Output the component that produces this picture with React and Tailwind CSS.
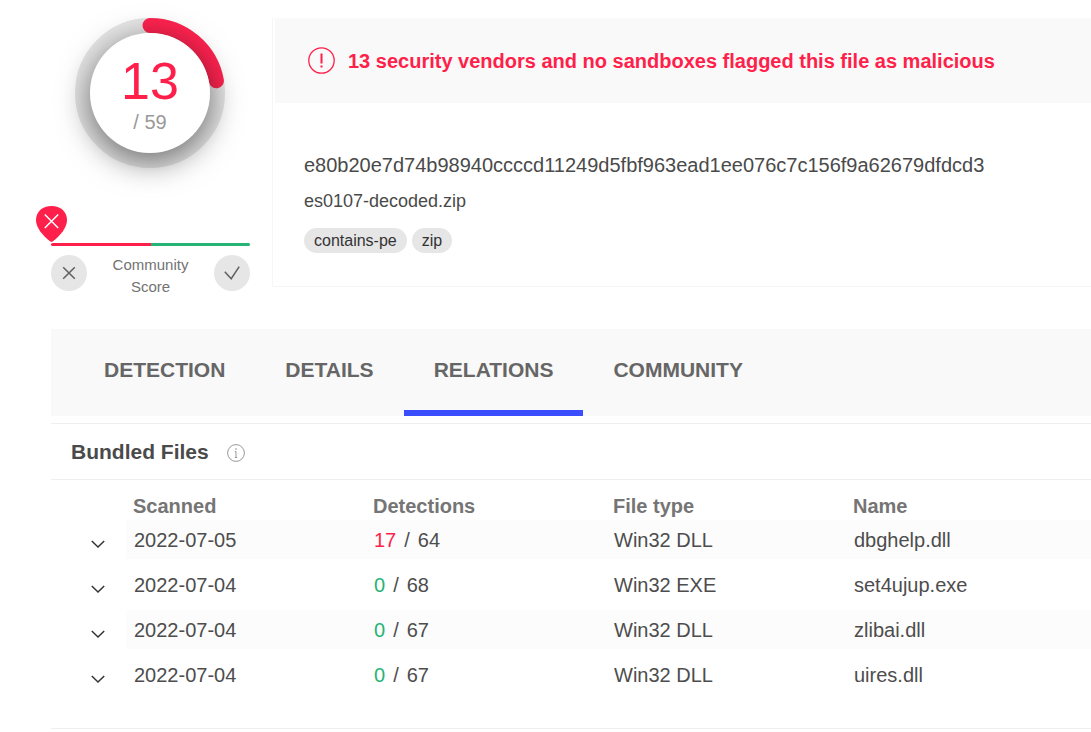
import React from "react";

const tags = ["contains-pe", "zip"];

const tabs = ["Detection", "Details", "Relations", "Community"];

const files = [
  { scanned: "2022-07-05", hits: 17, total: 64, type: "Win32 DLL", name: "dbghelp.dll" },
  { scanned: "2022-07-04", hits: 0, total: 68, type: "Win32 EXE", name: "set4ujup.exe" },
  { scanned: "2022-07-04", hits: 0, total: 67, type: "Win32 DLL", name: "zlibai.dll" },
  { scanned: "2022-07-04", hits: 0, total: 67, type: "Win32 DLL", name: "uires.dll" },
];

function ScoreDial() {
  return (
    <div className="relative ml-6 grid size-[150px] place-items-center">
      <svg viewBox="0 0 150 150" className="absolute inset-0 size-full" fill="none" aria-hidden="true">
        <circle cx="75" cy="75" r="67.5" stroke="#e6e6e6" strokeWidth="15" />
        <path d="M75 7.5A67.5 67.5 0 0 1 141.4 62.8" stroke="#ff2350" strokeWidth="15" strokeLinecap="round" />
      </svg>
      <div className="relative flex size-[120px] flex-col items-center rounded-full bg-white pt-5 shadow-[0_8px_32px_rgba(0,0,0,0.55)]">
        <span className="text-[52px] leading-[56px] text-[#ff1f4b]">13</span>
        <span className="text-[20px] leading-[26px] text-[#999]">/ 59</span>
      </div>
    </div>
  );
}

function CommunityScore() {
  return (
    <div className="mt-[75px]">
      <div className="relative flex h-[3px]">
        <span className="flex-1 rounded-l-full bg-[#ff1f4b]" />
        <span className="flex-1 rounded-r-full bg-[#27b376]" />
        <svg viewBox="0 0 31 36" className="absolute bottom-1 -left-[15px] h-9 w-[31px]" aria-hidden="true">
          <path
            d="M15.5 0C24.5 0 31 5.5 31 14.2C31 21.5 24.5 29.5 16.6 35.5Q15.5 36.2 14.4 35.5C6.5 29.5 0 21.5 0 14.2C0 5.5 6.5 0 15.5 0Z"
            fill="#ff1f4b"
          />
          <path d="M8.8 8.5L22.2 22M22.2 8.5L8.8 22" stroke="#fff" strokeWidth="1.5" />
        </svg>
      </div>
      <div className="mt-2 flex items-end justify-between">
        <button type="button" aria-label="Vote malicious" className="mb-[7px] grid size-9 place-items-center rounded-full bg-[#e6e6e6]">
          <svg viewBox="0 0 18 18" className="size-[18px]" stroke="#5f5f5f" strokeWidth="1.5" fill="none" aria-hidden="true">
            <path d="M3.2 3.2L14.8 14.8M14.8 3.2L3.2 14.8" />
          </svg>
        </button>
        <p className="w-20 text-center text-[15px] leading-[22px] text-[#737373]">Community Score</p>
        <button type="button" aria-label="Vote harmless" className="mb-[7px] grid size-9 place-items-center rounded-full bg-[#e6e6e6]">
          <svg viewBox="0 0 18 18" className="size-[18px]" stroke="#5f5f5f" strokeWidth="1.5" fill="none" aria-hidden="true">
            <path d="M1.8 7.8L8.2 14.7L16.2 2.7" />
          </svg>
        </button>
      </div>
    </div>
  );
}

function Summary() {
  return (
    <section className="min-w-0 flex-1 border-b border-l border-[#f6f6f6] pb-[33px]">
      <div className="ml-0.5 flex h-[85px] items-center gap-[13px] bg-[#f9f9f9] pl-[33px] text-[#ff1f4b]">
        <svg viewBox="0 0 27 27" className="size-[27px] shrink-0" fill="none" stroke="currentColor" aria-hidden="true">
          <circle cx="13.5" cy="13.5" r="12.7" strokeWidth="1.3" />
          <path d="M13.5 6.5V16.5M13.5 18.5V20.5" strokeWidth="2" />
        </svg>
        <h1 className="text-[20px] leading-7 font-bold">
          13 security vendors and no sandboxes flagged this file as malicious
        </h1>
      </div>
      <div className="pt-12 pl-[31px] text-[#4a4a4a]">
        <p className="text-[20px] leading-7">e80b20e7d74b98940ccccd11249d5fbf963ead1ee076c7c156f9a62679dfdcd3</p>
        <p className="mt-2 text-[18px] leading-7">es0107-decoded.zip</p>
        <ul className="mt-[13px] flex gap-[5px]">
          {tags.map((tag) => (
            <li key={tag} className="rounded-full bg-[#e6e6e6] px-2.5 text-[16px] leading-[25px] text-[#333]">
              {tag}
            </li>
          ))}
        </ul>
      </div>
    </section>
  );
}

function Tabs() {
  return (
    <nav className="mt-[31px] flex h-[87px] bg-[#f9f9f9] pl-[23px]">
      {tabs.map((tab) => (
        <a
          key={tab}
          href={"#" + tab.toLowerCase()}
          aria-current={tab === "Relations" ? "page" : undefined}
          className="border-b-6 border-transparent px-[30px] pt-[27px] text-[21px] leading-7 font-bold text-[#666] uppercase aria-[current=page]:border-[#3b4eff]"
        >
          {tab}
        </a>
      ))}
    </nav>
  );
}

function BundledFiles() {
  return (
    <section className="mt-[7px] border-y border-[#efefef] pb-7">
      <div className="flex h-14 items-center gap-[18px] border-b border-[#efefef] pl-5">
        <h2 className="text-[21px] leading-7 font-bold text-[#4a4a4a]">Bundled Files</h2>
        <svg viewBox="0 0 18 18" className="mt-0.5 size-[18px]" fill="none" stroke="#999" aria-hidden="true">
          <circle cx="9" cy="9" r="8.4" />
          <path d="M9 4V6M7.8 7.5H9V13.5M7.8 13.5H10.2" />
        </svg>
      </div>
      <table className="w-full table-fixed border-separate border-spacing-x-0 border-spacing-y-[6px] text-left text-[20px] leading-7 text-[#4d4d4d]">
        <colgroup>
          <col className="w-[75px]" />
          <col className="w-[240px]" />
          <col className="w-[240px]" />
          <col className="w-[240px]" />
          <col />
        </colgroup>
        <thead className="leading-4 text-[#757575]">
          <tr className="*:pt-3 *:pl-[7px]">
            <td />
            <th>Scanned</th>
            <th>Detections</th>
            <th>File type</th>
            <th>Name</th>
          </tr>
        </thead>
        <tbody>
          {files.map((file) => (
            <tr key={file.name} className="h-[39px] *:pl-2 odd:[&>td+td]:bg-[#fcfcfc]">
              <td>
                <button type="button" aria-label={"Expand " + file.name} className="ml-[31px] block pt-2">
                  <svg viewBox="0 0 16 16" className="size-4" fill="none" stroke="#333" strokeWidth="1.5" aria-hidden="true">
                    <path d="M1.8 5L8 11L14.2 5" />
                  </svg>
                </button>
              </td>
              <td>{file.scanned}</td>
              <td>
                <span className={file.hits > 0 ? "text-[#ff1f4b]" : "text-[#27b376]"}>{file.hits}</span>
                <span className="mx-2">/</span>
                {file.total}
              </td>
              <td>{file.type}</td>
              <td>{file.name}</td>
            </tr>
          ))}
        </tbody>
      </table>
    </section>
  );
}

export default function App() {
  return (
    <main className="min-h-screen bg-white pt-[18px] pl-[51px] font-['Liberation_Sans',Arial,sans-serif]">
      <div className="flex items-start gap-[22px]">
        <aside className="w-[199px] shrink-0">
          <ScoreDial />
          <CommunityScore />
        </aside>
        <Summary />
      </div>
      <Tabs />
      <BundledFiles />
    </main>
  );
}
